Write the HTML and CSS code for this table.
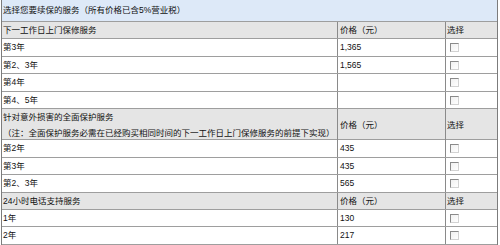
FILE: index.html
```html
<!DOCTYPE html>
<html lang="zh-CN">
<head>
<meta charset="utf-8">
<title>选择您要续保的服务</title>
<link rel="stylesheet" href="styles.css">
</head>
<body>
<div class="svc">
  <div class="row title"><div class="cell">选择您要续保的服务（所有价格已含5%营业税）</div></div>

  <div class="row sec h17"><div class="cell name">下一工作日上门保修服务</div><div class="cell price">价格（元）</div><div class="cell sel">选择</div></div>
  <div class="row item h18"><div class="cell name">第3年</div><div class="cell price">1,365</div><div class="cell sel"><input type="checkbox" class="cb"></div></div>
  <div class="row item h17"><div class="cell name">第2、3年</div><div class="cell price">1,565</div><div class="cell sel"><input type="checkbox" class="cb"></div></div>
  <div class="row item h18"><div class="cell name">第4年</div><div class="cell price"></div><div class="cell sel"><input type="checkbox" class="cb"></div></div>
  <div class="row item h17"><div class="cell name">第4、5年</div><div class="cell price"></div><div class="cell sel"><input type="checkbox" class="cb"></div></div>

  <div class="row sec dbl"><div class="cell name">针对意外损害的全面保护服务<br>（注：全面保护服务必需在已经购买相同时间的下一工作日上门保修服务的前提下实现）</div><div class="cell price">价格（元）</div><div class="cell sel">选择</div></div>
  <div class="row item h18"><div class="cell name">第2年</div><div class="cell price">435</div><div class="cell sel"><input type="checkbox" class="cb"></div></div>
  <div class="row item h17"><div class="cell name">第3年</div><div class="cell price">435</div><div class="cell sel"><input type="checkbox" class="cb"></div></div>
  <div class="row item h18"><div class="cell name">第2、3年</div><div class="cell price">565</div><div class="cell sel"><input type="checkbox" class="cb"></div></div>

  <div class="row sec h17"><div class="cell name">24小时电话支持服务</div><div class="cell price">价格（元）</div><div class="cell sel">选择</div></div>
  <div class="row item h17"><div class="cell name">1年</div><div class="cell price">130</div><div class="cell sel"><input type="checkbox" class="cb"></div></div>
  <div class="row item h18"><div class="cell name">2年</div><div class="cell price">217</div><div class="cell sel"><input type="checkbox" class="cb"></div></div>
</div>
</body>
</html>
```

FILE: styles.css
```css
html, body {
  margin: 0;
  padding: 0;
  background: #fff;
}
body {
  font-family: "Liberation Sans", "Noto Sans CJK SC", sans-serif;
  font-size: 8.5px;
  color: #111;
}
.svc {
  width: 497px;
  margin-left: 1px;
  box-sizing: border-box;
  border-left: 1px solid #7c7c7c;
  border-right: 1px solid #7c7c7c;
}
.row {
  display: grid;
  grid-template-columns: 335px 108px 52px;
  box-sizing: border-box;
  border-bottom: 1px solid #9e9e9e;
}
.cell {
  display: flex;
  align-items: center;
  box-sizing: border-box;
  line-height: 11px;
  white-space: nowrap;
}
.title {
  grid-template-columns: 1fr;
  height: 22px;
  background: #dde9f8;
}
.title .cell { padding-left: 1px; }
.h17 { height: 17px; }
.h18 { height: 18px; }
.dbl { height: 31px; }
.dbl .cell { line-height: 16px; }
.sec { background: #e5e5e5; }
.item { background: #fff; }
.name { padding-left: 1px; }
.price {
  padding-left: 2px;
  border-left: 1px solid #8a8a8a;
}
.sel {
  padding-left: 1px;
  border-left: 1px solid #8a8a8a;
}
.item .sel { padding-left: 4px; }
.cb {
  appearance: none;
  -webkit-appearance: none;
  display: block;
  margin: 0;
  width: 9px;
  height: 9px;
  box-sizing: border-box;
  border: 1px solid;
  border-color: #8a8a8a #d2d2d2 #d2d2d2 #8a8a8a;
  background: linear-gradient(135deg, #f0f0f0, #fff);
}
```
